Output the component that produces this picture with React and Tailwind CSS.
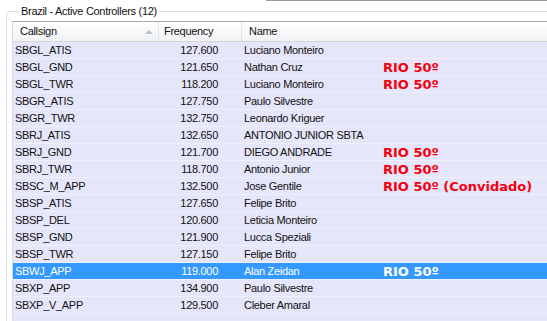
const rows = [
  ["SBGL_ATIS", "127.600", "Luciano Monteiro", ""],
  ["SBGL_GND", "121.650", "Nathan Cruz", "RIO 50º"],
  ["SBGL_TWR", "118.200", "Luciano Monteiro", "RIO 50º"],
  ["SBGR_ATIS", "127.750", "Paulo Silvestre", ""],
  ["SBGR_TWR", "132.750", "Leonardo Kriguer", ""],
  ["SBRJ_ATIS", "132.650", "ANTONIO JUNIOR SBTA", ""],
  ["SBRJ_GND", "121.700", "DIEGO ANDRADE", "RIO 50º"],
  ["SBRJ_TWR", "118.700", "Antonio Junior", "RIO 50º"],
  ["SBSC_M_APP", "132.500", "Jose Gentile", "RIO 50º (Convidado)"],
  ["SBSP_ATIS", "127.650", "Felipe Brito", ""],
  ["SBSP_DEL", "120.600", "Leticia Monteiro", ""],
  ["SBSP_GND", "121.900", "Lucca Speziali", ""],
  ["SBSP_TWR", "127.150", "Felipe Brito", ""],
  ["SBWJ_APP", "119.000", "Alan Zeidan", "RIO 50º"],
  ["SBXP_APP", "134.900", "Paulo Silvestre", ""],
  ["SBXP_V_APP", "129.500", "Cleber Amaral", ""],
];

const selectedCallsign = "SBWJ_APP";

function Row({ row }) {
  const [callsign, freq, name, tag] = row;
  const selected = callsign === selectedCallsign;
  return (
    <div
      className={`flex h-[17px] items-center border-b border-[#f0f0fb] ${
        selected ? "bg-[#3399ff] text-white" : "text-[#111]"
      }`}
    >
      <div className="w-[146px] pl-[2px] whitespace-nowrap">{callsign}</div>
      <div className="w-[83px] pr-[24px] text-right">{freq}</div>
      <div className="w-[139px] pl-[2px] whitespace-nowrap">{name}</div>
      <div
        className={`pl-[2px] whitespace-nowrap font-bold text-[13px] tracking-normal font-['DejaVu_Sans',sans-serif] ${
          selected ? "text-white" : "text-[#f5000f]"
        }`}
      >
        {tag}
      </div>
    </div>
  );
}

export default function App() {
  return (
    <div className="w-[547px] h-[321px] overflow-hidden bg-white font-['Liberation_Sans',Arial,sans-serif] text-[11px] tracking-[-0.3px] leading-[17px]">
      <div className="ml-[266px] h-[1px] bg-[#9d9d9d]"></div>
      <fieldset className="ml-[6px] mt-[3px] border-l border-t border-[#d5dfe5] rounded-tl-[4px] pl-[5px] pt-[3px]">
        <legend className="ml-[7px] px-[2px] leading-[14px] text-[#111]">
          Brazil - Active Controllers (12)
        </legend>
        <div className="border-t border-l border-[#a7abb0] border-l-[#d9dbe0] bg-[#e6e6fa] h-[320px]">
          <div className="flex h-[20px] items-center border-b border-[#d5d5d5] bg-gradient-to-b from-white to-[#f1f2f4] text-[#111]">
            <div className="relative w-[146px] h-full flex items-center pl-[7px] border-r border-[#e3e4e6]">
              Callsign
              <svg
                className="absolute right-[5px] top-[7px]"
                width="8"
                height="5"
                viewBox="0 0 8 5"
              >
                <path d="M0 5 L4 1 L8 5 Z" fill="#b9c3cd" />
              </svg>
            </div>
            <div className="w-[83px] h-full flex items-center pl-[5px] border-r border-[#e3e4e6]">
              Frequency
            </div>
            <div className="h-full flex items-center pl-[7px]">Name</div>
          </div>
          {rows.map((r) => (
            <Row key={r[0]} row={r} />
          ))}
        </div>
      </fieldset>
    </div>
  );
}
